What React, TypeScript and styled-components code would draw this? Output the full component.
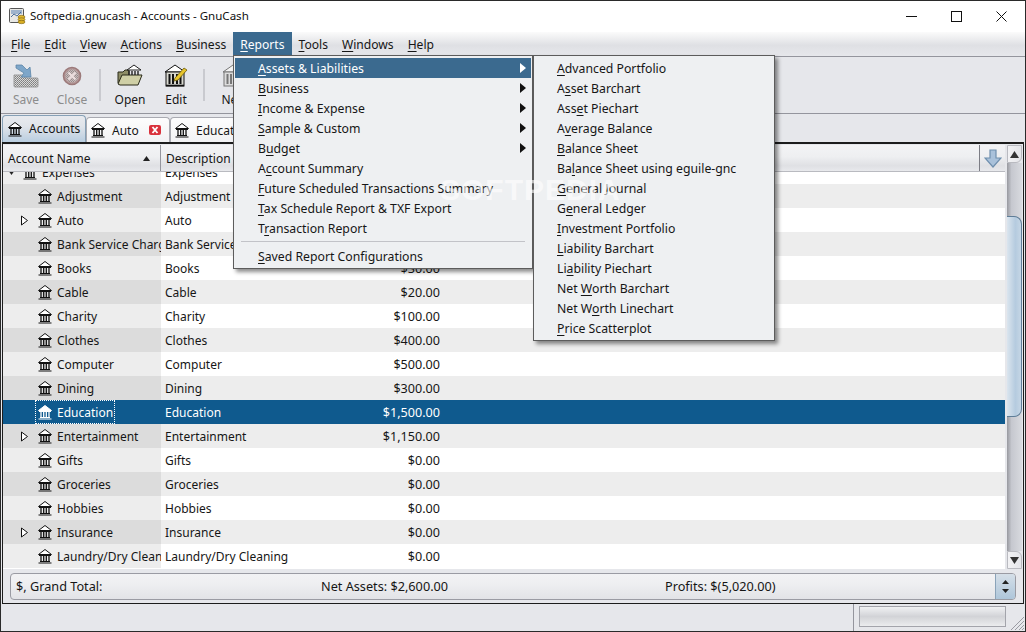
import styled, { createGlobalStyle } from "styled-components";

const uiFont = `"Noto Sans", "DejaVu Sans", sans-serif`;

type Account = {
  name: string;
  desc: string;
  amount: string;
  expander?: boolean;
  selected?: boolean;
  top?: boolean;
};

const accounts: Account[] = [
  { name: "Expenses", desc: "Expenses", amount: "", top: true },
  { name: "Adjustment", desc: "Adjustment", amount: "$0.00" },
  { name: "Auto", desc: "Auto", amount: "$0.00", expander: true },
  { name: "Bank Service Charge", desc: "Bank Service Charge", amount: "$0.00" },
  { name: "Books", desc: "Books", amount: "$30.00" },
  { name: "Cable", desc: "Cable", amount: "$20.00" },
  { name: "Charity", desc: "Charity", amount: "$100.00" },
  { name: "Clothes", desc: "Clothes", amount: "$400.00" },
  { name: "Computer", desc: "Computer", amount: "$500.00" },
  { name: "Dining", desc: "Dining", amount: "$300.00" },
  { name: "Education", desc: "Education", amount: "$1,500.00", selected: true },
  { name: "Entertainment", desc: "Entertainment", amount: "$1,150.00", expander: true },
  { name: "Gifts", desc: "Gifts", amount: "$0.00" },
  { name: "Groceries", desc: "Groceries", amount: "$0.00" },
  { name: "Hobbies", desc: "Hobbies", amount: "$0.00" },
  { name: "Insurance", desc: "Insurance", amount: "$0.00", expander: true },
  { name: "Laundry/Dry Cleaning", desc: "Laundry/Dry Cleaning", amount: "$0.00" },
];

const menuBar: [string, number][] = [
  ["File", 0],
  ["Edit", 0],
  ["View", 0],
  ["Actions", 0],
  ["Business", 0],
  ["Reports", 0],
  ["Tools", 0],
  ["Windows", 0],
  ["Help", 0],
];

const reportItems: [string, number, boolean][] = [
  ["Assets & Liabilities", 0, true],
  ["Business", 0, true],
  ["Income & Expense", 0, true],
  ["Sample & Custom", 0, true],
  ["Budget", 1, true],
  ["Account Summary", 1, false],
  ["Future Scheduled Transactions Summary", 0, false],
  ["Tax Schedule Report & TXF Export", 0, false],
  ["Transaction Report", 1, false],
];

const assetItems: [string, number][] = [
  ["Advanced Portfolio", 0],
  ["Asset Barchart", 1],
  ["Asset Piechart", 3],
  ["Average Balance", 1],
  ["Balance Sheet", 0],
  ["Balance Sheet using eguile-gnc", 2],
  ["General Journal", 0],
  ["General Ledger", 1],
  ["Investment Portfolio", 0],
  ["Liability Barchart", 0],
  ["Liability Piechart", 2],
  ["Net Worth Barchart", 4],
  ["Net Worth Linechart", 5],
  ["Price Scatterplot", 0],
];

function Mnemonic({ text, at }: { text: string; at: number }) {
  return (
    <span>
      {text.slice(0, at)}
      <u>{text[at]}</u>
      {text.slice(at + 1)}
    </span>
  );
}

function BankIcon({ light }: { light?: boolean }) {
  const ink = light ? "#ffffff" : "#111111";
  return (
    <svg width="16" height="16" viewBox="0 0 16 16">
      <path d="M8 1.5 14.5 6.5H1.5Z" fill="#fff" stroke={ink} strokeWidth="1" />
      <path d="M2 7.5H14M3 13.5H13M1.5 15H14.5" stroke={ink} strokeWidth="1.1" fill="none" />
      <path d="M4 8V13M6.7 8V13M9.3 8V13M12 8V13" stroke={ink} strokeWidth="1.3" fill="none" />
    </svg>
  );
}

function AppIcon() {
  return (
    <svg width="17" height="17" viewBox="0 0 17 17">
      <rect x="0.5" y="0.5" width="14" height="14" rx="1" fill="#e8e8e4" stroke="#555" />
      <rect x="2" y="2" width="11" height="4" fill="#9fb4cc" />
      <path d="M2 9 5 6 8 8 12 4" stroke="#4a6f9c" fill="none" />
      <ellipse cx="12.5" cy="9" rx="3.5" ry="1.7" fill="#e2b92f" stroke="#7a5f10" strokeWidth="0.6" />
      <ellipse cx="12.5" cy="11.5" rx="3.5" ry="1.7" fill="#e2b92f" stroke="#7a5f10" strokeWidth="0.6" />
      <ellipse cx="12.5" cy="14" rx="3.5" ry="1.7" fill="#d9ae24" stroke="#7a5f10" strokeWidth="0.6" />
    </svg>
  );
}

function Dither() {
  return (
    <defs>
      <pattern id="dither" width="2" height="2" patternUnits="userSpaceOnUse">
        <rect width="2" height="2" fill="#d8d8d8" />
        <rect width="1" height="1" fill="#7d7d7d" />
        <rect x="1" y="1" width="1" height="1" fill="#8d8d8d" />
      </pattern>
    </defs>
  );
}

function SaveIcon() {
  return (
    <svg width="26" height="24" viewBox="0 0 26 24">
      <Dither />
      <path d="M1 11H10L14 14H24Q25 14 25 15V22Q25 23 24 23H2Q1 23 1 22Z" fill="url(#dither)" stroke="#9a9a9a" />
      <path d="M3 1 9 1 14 6 17 3 18 13 8 13 11 9 3 4Z" fill="#7ea6c9" stroke="#5d86a8" strokeWidth="0.8" />
    </svg>
  );
}

function CloseIcon() {
  return (
    <svg width="22" height="22" viewBox="0 0 22 22">
      <Dither />
      <circle cx="11" cy="11" r="8.5" fill="#b59a9a" stroke="#9c7a7a" strokeWidth="1.6" />
      <circle cx="11" cy="11" r="6.5" fill="url(#dither)" opacity="0.55" />
      <path d="M7.5 7.5 14.5 14.5M14.5 7.5 7.5 14.5" stroke="#ecdede" strokeWidth="2.2" />
    </svg>
  );
}

function OpenIcon() {
  return (
    <svg width="26" height="24" viewBox="0 0 26 24">
      <path d="M1 8H6L8 6H12V20H3L1 19Z" fill="#8e8d66" stroke="#2a2a1a" />
      <path d="M1 20 5 11H25L21 21H3Z" fill="#cfcfa6" stroke="#2a2a1a" />
      <path d="M17 1 24 6H10Z" fill="#fff" stroke="#222" />
      <path d="M12 7V11M15 7V11M18 7V11M21 7V11" stroke="#222" strokeWidth="1.4" />
    </svg>
  );
}

function EditIcon() {
  return (
    <svg width="24" height="24" viewBox="0 0 24 24">
      <path d="M11 1 21 8H1Z" fill="#fff" stroke="#111" />
      <rect x="2" y="8" width="18" height="14" fill="#d8d8d0" stroke="#111" />
      <path d="M5.5 10V20M9 10V20M13 10V20M16.5 10V20" stroke="#111" strokeWidth="2" />
      <path d="M2 21.5H20" stroke="#111" strokeWidth="1.6" />
      <path d="M11 14 20 4 23 6 14 16 10 17Z" fill="#e8c52c" stroke="#6b5a10" strokeWidth="0.8" />
    </svg>
  );
}

function NewIcon() {
  return (
    <svg width="24" height="24" viewBox="0 0 24 24">
      <path d="M11 1 21 8H1Z" fill="#f4f4f4" stroke="#777" />
      <rect x="2" y="8" width="18" height="14" fill="#dcdcdc" stroke="#777" />
      <path d="M5.5 10V20M9 10V20M13 10V20M16.5 10V20" stroke="#777" strokeWidth="2" />
    </svg>
  );
}

function TabClose() {
  return (
    <svg width="12" height="10" viewBox="0 0 12 10">
      <rect width="12" height="10" rx="2" fill="#d9323c" />
      <path d="M3.5 2 8.5 8M8.5 2 3.5 8" stroke="#fff" strokeWidth="1.8" />
    </svg>
  );
}

function SortArrow() {
  return (
    <svg width="7" height="5" viewBox="0 0 7 5">
      <path d="M3.5 0 7 5H0Z" fill="#222" />
    </svg>
  );
}

function ColumnArrow() {
  return (
    <svg width="18" height="19" viewBox="0 0 18 19">
      <path d="M6 1H12V9H17L9 18 1 9H6Z" fill="#a9c1da" stroke="#6f8fae" strokeWidth="1.2" />
    </svg>
  );
}

export default function App() {
  return (
    <>
      <GlobalStyle />
      <Window>
        <TitleBar>
          <AppIcon />
          <TitleText>Softpedia.gnucash - Accounts - GnuCash</TitleText>
          <WindowControls>
            <WindowButton>
              <svg width="11" height="11" viewBox="0 0 11 11">
                <path d="M0 5.5H11" stroke="#111" />
              </svg>
            </WindowButton>
            <WindowButton>
              <svg width="11" height="11" viewBox="0 0 11 11">
                <rect x="0.5" y="0.5" width="10" height="10" fill="none" stroke="#111" />
              </svg>
            </WindowButton>
            <WindowButton>
              <svg width="11" height="11" viewBox="0 0 11 11">
                <path d="M0.5 0.5 10.5 10.5M10.5 0.5 0.5 10.5" stroke="#111" />
              </svg>
            </WindowButton>
          </WindowControls>
        </TitleBar>

        <MenuBar>
          {menuBar.map(([label, at]) => (
            <MenuTitle key={label} $open={label === "Reports"}>
              <Mnemonic text={label} at={at} />
            </MenuTitle>
          ))}
        </MenuBar>

        <Toolbar>
          <ToolButton $disabled>
            <ToolIcon><SaveIcon /></ToolIcon>
            Save
          </ToolButton>
          <ToolButton $disabled>
            <ToolIcon><CloseIcon /></ToolIcon>
            Close
          </ToolButton>
          <ToolSeparator />
          <ToolButton>
            <ToolIcon><OpenIcon /></ToolIcon>
            Open
          </ToolButton>
          <ToolButton>
            <ToolIcon><EditIcon /></ToolIcon>
            Edit
          </ToolButton>
          <ToolSeparator />
          <ToolButton>
            <ToolIcon><NewIcon /></ToolIcon>
            New
          </ToolButton>
        </Toolbar>

        <TabStrip>
          <Tab $active $width={84}>
            <BankIcon />
            <TabLabel>Accounts</TabLabel>
          </Tab>
          <Tab $width={84}>
            <BankIcon />
            <TabLabel>Auto</TabLabel>
            <TabCloseSlot><TabClose /></TabCloseSlot>
          </Tab>
          <Tab $width={110}>
            <BankIcon />
            <TabLabel>Education</TabLabel>
          </Tab>
        </TabStrip>

        <Page>
          <TreeArea>
            <Tree>
              <Header>
                <NameHeader>
                  Account Name
                  <SortArrow />
                </NameHeader>
                <HeaderCell $width={170}>Description</HeaderCell>
                <HeaderCell $width={113}>Total</HeaderCell>
                <HeaderFill />
                <HeaderButton><ColumnArrow /></HeaderButton>
              </Header>
              <RowViewport>
                <RowList>
                  {accounts.map((a, i) => (
                    <Row key={a.name} $odd={i % 2 === 1} $selected={a.selected}>
                      <NameCell $odd={i % 2 === 1} $selected={a.selected} $top={a.top}>
                        <Expander $top={a.top}>
                          {a.top ? (
                            <svg width="9" height="9" viewBox="0 0 9 9">
                              <path d="M1 2H8L4.5 7Z" fill="#222" />
                            </svg>
                          ) : a.expander ? (
                            <svg width="9" height="11" viewBox="0 0 9 11">
                              <path d="M1.5 1 7.5 5.5 1.5 10Z" fill="#fff" stroke="#111" />
                            </svg>
                          ) : null}
                        </Expander>
                        <NameFocus $selected={a.selected}>
                          <BankIcon light={a.selected} />
                          <NameText>{a.name}</NameText>
                        </NameFocus>
                      </NameCell>
                      <DescCell>{a.desc}</DescCell>
                      <AmountCell>{a.amount}</AmountCell>
                    </Row>
                  ))}
                </RowList>
              </RowViewport>
            </Tree>
            <ScrollBar>
              <ScrollStep $first>
                <svg width="9" height="7" viewBox="0 0 9 7">
                  <path d="M4.5 0 9 7H0Z" fill="#333" />
                </svg>
              </ScrollStep>
              <ScrollTrack>
                <ScrollThumb />
              </ScrollTrack>
              <ScrollStep>
                <svg width="9" height="7" viewBox="0 0 9 7">
                  <path d="M0 0H9L4.5 7Z" fill="#333" />
                </svg>
              </ScrollStep>
            </ScrollBar>
          </TreeArea>
          <Summary>
            <SummaryCell $width={305}>$, Grand Total:</SummaryCell>
            <SummaryCell $width={344}>Net Assets: $2,600.00</SummaryCell>
            <SummaryCell $width={330}>Profits: $(5,020.00)</SummaryCell>
            <SummaryStepper>
              <svg width="7" height="13" viewBox="0 0 7 13">
                <path d="M3.5 0 7 4H0ZM0 9H7L3.5 13Z" fill="#222" />
              </svg>
            </SummaryStepper>
          </Summary>
        </Page>

        <StatusBar>
          <StatusFill />
          <ProgressBox />
          <Grip>
            <svg width="16" height="16" viewBox="0 0 16 16">
              <path d="M15 2 2 15M15 6 6 15M15 10 10 15M15 13 13 15" stroke="#9a9ba3" />
            </svg>
          </Grip>
        </StatusBar>

        <ReportsMenu>
          {reportItems.map(([label, at, sub], i) => (
            <MenuItem key={label} $active={i === 0}>
              <Mnemonic text={label} at={at} />
              {sub && (
                <SubArrow>
                  <svg width="6" height="10" viewBox="0 0 6 10">
                    <path d="M0 0 6 5 0 10Z" fill={i === 0 ? "#fff" : "#111"} />
                  </svg>
                </SubArrow>
              )}
            </MenuItem>
          ))}
          <MenuSeparator />
          <MenuItem>
            <Mnemonic text="Saved Report Configurations" at={0} />
          </MenuItem>
        </ReportsMenu>

        <AssetsMenu>
          {assetItems.map(([label, at]) => (
            <SubMenuItem key={label}>
              <Mnemonic text={label} at={at} />
            </SubMenuItem>
          ))}
        </AssetsMenu>

        <Watermark>SOFTPEDIA</Watermark>
      </Window>
    </>
  );
}

const GlobalStyle = createGlobalStyle`
  html, body {
    margin: 0;
    padding: 0;
    background: #e6e7eb;
    overflow: hidden;
  }
  * {
    box-sizing: border-box;
  }
`;

const Window = styled.div`
  position: relative;
  width: 1026px;
  height: 632px;
  display: flex;
  flex-direction: column;
  border: 1px solid #2a2a2a;
  background: #e6e7eb;
  font-family: ${uiFont};
  font-size: 12px;
  color: #161616;
  overflow: hidden;
  u {
    text-underline-offset: 2px;
  }
`;

const TitleBar = styled.div`
  height: 31px;
  flex: none;
  display: flex;
  align-items: center;
  padding-left: 8px;
  background: #fff;
`;

const TitleText = styled.span`
  margin-left: 4px;
  padding-bottom: 2px;
  font-size: 11.55px;
  color: #111;
`;

const WindowControls = styled.div`
  margin-left: auto;
  display: flex;
`;

const WindowButton = styled.div`
  width: 45px;
  height: 31px;
  display: flex;
  align-items: center;
  justify-content: center;
  svg {
    display: block;
  }
  &:last-child {
    margin-right: 1px;
  }
`;

const MenuBar = styled.div`
  height: 25px;
  flex: none;
  display: flex;
  padding-left: 3px;
  font-size: 12.1px;
  background: linear-gradient(#fbfbfb, #dfe0e4 55%, #e6e7eb);
  border-bottom: 1px solid #94959d;
`;

const MenuTitle = styled.div<{ $open?: boolean }>`
  padding: 0 7px;
  display: flex;
  align-items: center;
  background: ${(p) => (p.$open ? "#3b6a8f" : "transparent")};
  color: ${(p) => (p.$open ? "#fff" : "inherit")};
`;

const Toolbar = styled.div`
  height: 57px;
  flex: none;
  display: flex;
  padding-left: 2px;
  border-bottom: 1px solid #94959d;
`;

const ToolButton = styled.div<{ $disabled?: boolean }>`
  width: 46px;
  display: flex;
  flex-direction: column;
  align-items: center;
  color: ${(p) => (p.$disabled ? "#8c8c8c" : "#161616")};
`;

const ToolIcon = styled.div`
  height: 34px;
  padding-top: 4px;
  display: flex;
  align-items: center;
  justify-content: center;
`;

const ToolSeparator = styled.div`
  width: 2px;
  height: 32px;
  margin: 12px 6px 0 4px;
  background: #c9cacf;
`;

const TabStrip = styled.div`
  height: 28px;
  flex: none;
  display: flex;
  align-items: flex-end;
  padding-left: 1px;
`;

const Tab = styled.div<{ $active?: boolean; $width: number }>`
  width: ${(p) => p.$width}px;
  height: ${(p) => (p.$active ? 27 : 25)}px;
  display: flex;
  align-items: center;
  padding-left: ${(p) => (p.$active ? 4 : 3)}px;
  padding-bottom: ${(p) => (p.$active ? 1 : 0)}px;
  border: 1px solid ${(p) => (p.$active ? "#86a0b6" : "#a9aab1")};
  border-bottom: none;
  border-radius: 4px 4px 0 0;
  background: ${(p) =>
    p.$active ? "linear-gradient(#e8eaee, #e0e4ea 40%, #b9cde0)" : "linear-gradient(#fdfdfd, #f2f2f4)"};
`;

const TabLabel = styled.span`
  margin-left: 6px;
`;

const TabCloseSlot = styled.span`
  margin-left: auto;
  margin-right: 8px;
  display: flex;
`;

const Page = styled.div`
  height: 462px;
  flex: none;
  display: flex;
  flex-direction: column;
  margin-left: 1px;
  margin-right: 1px;
  border: 1px solid #1c1c1c;
  border-width: 2px 1px 1px;
`;

const TreeArea = styled.div`
  height: 424px;
  flex: none;
  display: flex;
  margin-top: 1px;
`;

const Tree = styled.div`
  width: 1002px;
  flex: none;
  display: flex;
  flex-direction: column;
  background: #fff;
`;

const Header = styled.div`
  height: 27px;
  flex: none;
  display: flex;
  background: linear-gradient(#f3f3f5, #eeeff1 45%, #dfe0e4 80%, #e8e9ec);
  border-bottom: 1px solid #b9bac0;
`;

const HeaderCell = styled.div<{ $width: number }>`
  width: ${(p) => p.$width}px;
  flex: none;
  display: flex;
  align-items: center;
  padding-left: 5px;
  border-right: 1px solid #94959d;
`;

const NameHeader = styled(HeaderCell).attrs({ $width: 158 })`
  justify-content: space-between;
  padding-right: 10px;
`;

const HeaderFill = styled.div`
  flex: 1;
  border-right: 1px solid #7c7d85;
`;

const HeaderButton = styled.div`
  width: 25px;
  flex: none;
  display: flex;
  align-items: center;
  justify-content: center;
`;

const RowViewport = styled.div`
  flex: 1;
  min-height: 0;
  overflow: hidden;
`;

const RowList = styled.div`
  margin-top: -12px;
`;

const Row = styled.div<{ $odd: boolean; $selected?: boolean }>`
  height: 24px;
  display: flex;
  align-items: center;
  background: ${(p) => (p.$selected ? "#0f5a8e" : p.$odd ? "#ededed" : "#fff")};
  color: ${(p) => (p.$selected ? "#fff" : "inherit")};
`;

const NameCell = styled.div<{ $odd: boolean; $selected?: boolean; $top?: boolean }>`
  width: 158px;
  height: 100%;
  flex: none;
  display: flex;
  align-items: center;
  overflow: hidden;
  white-space: nowrap;
  padding-left: ${(p) => (p.$top ? 2 : 15)}px;
  background: ${(p) => (p.$selected ? "#0f5a8e" : p.$odd ? "#dcdcdc" : "#ededed")};
`;

const Expander = styled.span<{ $top?: boolean }>`
  width: ${(p) => (p.$top ? 16 : 18)}px;
  flex: none;
  display: flex;
  padding-left: 2px;
`;

const NameFocus = styled.span<{ $selected?: boolean }>`
  display: flex;
  align-items: center;
  height: 22px;
  padding: 0 1px;
  outline: ${(p) => (p.$selected ? "1px dotted #fff" : "none")};
  svg {
    flex: none;
  }
`;

const NameText = styled.span`
  margin-left: 4px;
`;

const DescCell = styled.div`
  width: 170px;
  flex: none;
  padding-left: 4px;
  white-space: nowrap;
  overflow: hidden;
`;

const AmountCell = styled.div`
  width: 113px;
  flex: none;
  padding-right: 4px;
  font-size: 12.6px;
  text-align: right;
`;

const ScrollBar = styled.div`
  width: 16px;
  flex: none;
  display: flex;
  flex-direction: column;
  margin-left: 2px;
  padding-right: 1px;
`;

const ScrollStep = styled.div<{ $first?: boolean }>`
  height: 18px;
  flex: none;
  display: flex;
  align-items: center;
  justify-content: center;
  background: linear-gradient(90deg, #f2f2f4, #e4e5e9);
  border: 1px solid #b9bac0;
  border-radius: ${(p) => (p.$first ? "0 0 6px 0" : "0 6px 0 0")};
`;

const ScrollTrack = styled.div`
  flex: 1;
  min-height: 0;
  background: linear-gradient(90deg, #98999f, #c6c8cf 30%, #d8dadf);
  padding-top: 53px;
`;

const ScrollThumb = styled.div`
  height: 201px;
  border: 1px solid #5f7d97;
  border-left: none;
  border-radius: 0 8px 8px 0;
  background: linear-gradient(90deg, #dbe5ee, #b5cbdf 60%, #c5d6e5);
`;

const Summary = styled.div`
  height: 27px;
  flex: none;
  display: flex;
  align-items: center;
  margin: 4px 7px 0 7px;
  padding-left: 5px;
  padding-bottom: 1px;
  border: 1px solid #9a9ba3;
  border-radius: 4px;
  font-size: 12.7px;
  background: linear-gradient(#f2f2f4, #eeeff1 40%, #e2e3e7);
`;

const SummaryCell = styled.div<{ $width: number }>`
  width: ${(p) => p.$width}px;
  flex: none;
  white-space: nowrap;
`;

const SummaryStepper = styled.div`
  margin-left: auto;
  width: 21px;
  height: calc(100% + 1px);
  display: flex;
  align-items: center;
  justify-content: center;
  border-left: 1px solid #8aa3b9;
  border-radius: 0 3px 3px 0;
  background: linear-gradient(#d5dfe8, #aec6da);
`;

const StatusBar = styled.div`
  flex: 1;
  min-height: 0;
  display: flex;
  padding-top: 2px;
`;

const StatusFill = styled.div`
  width: 853px;
  flex: none;
  border-right: 1px solid #94959d;
  margin-top: -2px;
`;

const ProgressBox = styled.div`
  width: 147px;
  height: 21px;
  margin-left: 5px;
  border: 1px solid #a3a4ab;
  background: linear-gradient(#f0f1f3, #d2d3d7 50%, #ebecee);
`;

const Grip = styled.div`
  margin-left: auto;
  align-self: flex-end;
  display: flex;
`;

const ReportsMenu = styled.div`
  position: absolute;
  left: 232px;
  top: 54px;
  width: 300px;
  padding: 2px 1px;
  font-size: 12.25px;
  background: #eef0f2;
  border: 1px solid #5c5c5c;
  box-shadow: 3px 3px 4px rgba(0, 0, 0, 0.45);
`;

const MenuItem = styled.div<{ $active?: boolean }>`
  height: 20px;
  display: flex;
  align-items: center;
  padding-left: 23px;
  background: ${(p) => (p.$active ? "#3b6a8f" : "transparent")};
  color: ${(p) => (p.$active ? "#fff" : "inherit")};
`;

const SubArrow = styled.span`
  margin-left: auto;
  margin-right: 5px;
  display: flex;
`;

const MenuSeparator = styled.div`
  height: 1px;
  margin: 3px 6px 4px;
  background: #c2c3c8;
`;

const AssetsMenu = styled(ReportsMenu)`
  left: 532px;
  width: 242px;
`;

const SubMenuItem = styled(MenuItem)`
  padding-left: 22px;
`;

const Watermark = styled.div`
  position: absolute;
  left: 439px;
  top: 172px;
  font-family: "Liberation Sans", sans-serif;
  font-size: 30px;
  font-weight: 700;
  letter-spacing: 1px;
  color: rgba(255, 255, 255, 0.6);
  pointer-events: none;
`;
